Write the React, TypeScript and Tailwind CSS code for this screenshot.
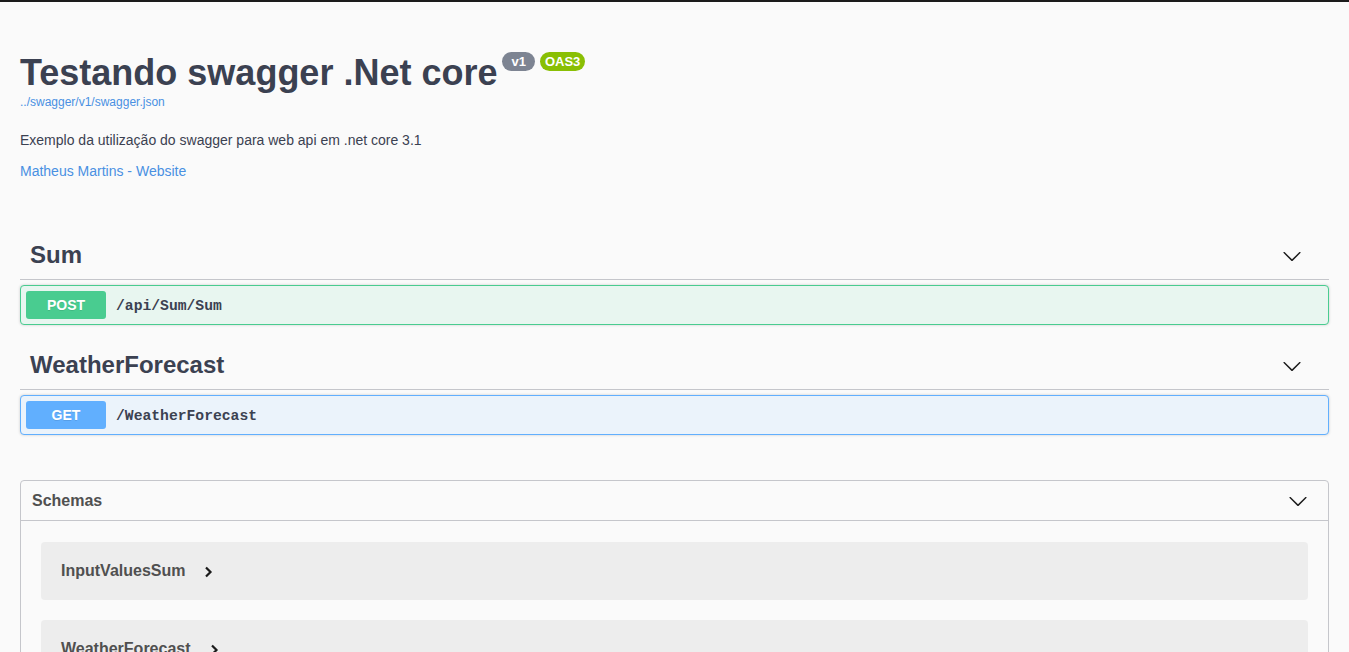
import React from 'react';

const FONT = { fontFamily: '"Liberation Sans", Arial, sans-serif' };
const MONO = { fontFamily: '"Liberation Mono", "DejaVu Sans Mono", monospace' };

function ChevronDown() {
  return (
    <svg width="20" height="20" viewBox="0 0 20 20" className="text-[#1b1b1b]" fill="currentColor">
      <path d="M17.418 6.109c.272-.268.709-.268.979 0s.271.701 0 .969l-7.908 7.83c-.27.268-.707.268-.979 0l-7.908-7.83c-.27-.268-.27-.701 0-.969.271-.268.709-.268.98 0L10 13.25l7.418-7.141z" />
    </svg>
  );
}

function ChevronRight() {
  return (
    <svg width="10" height="12" viewBox="0 0 10 12" fill="none" stroke="#1b1b1b" strokeWidth={2.2}>
      <path d="M3 1.5l4.5 4.5L3 10.5" />
    </svg>
  );
}

function Tag({ name }: { name: string }) {
  return (
    <div className="flex items-center border-b border-[#c5c6cb] pl-[10px] pr-[20px] pt-[10px] pb-[10px] mb-[5px]">
      <h3 className="flex-1 text-[24px] leading-[28px] font-bold text-[#3b4151]">{name}</h3>
      <div className="mr-[7px] mt-[1px]">
        <ChevronDown />
      </div>
    </div>
  );
}

function Operation({ method, path }: { method: 'POST' | 'GET'; path: string }) {
  const post = method === 'POST';
  return (
    <div
      className={
        'mb-[16px] h-[40px] rounded-[4px] border px-[5px] flex items-center shadow-[0_0_3px_rgba(0,0,0,0.19)] ' +
        (post ? 'border-[#49cc90] bg-[#e8f6f0]' : 'border-[#61affe] bg-[#ebf3fb]')
      }
    >
      <span
        className={
          'min-w-[80px] rounded-[3px] px-[15px] py-[6px] text-center text-[14px] leading-[16px] font-bold text-white [text-shadow:0_1px_0_rgba(0,0,0,0.1)] ' +
          (post ? 'bg-[#49cc90]' : 'bg-[#61affe]')
        }
      >
        {method}
      </span>
      <span className="px-[10px] mt-[2px] text-[14.7px] font-bold text-[#3b4151]" style={MONO}>
        {path}
      </span>
    </div>
  );
}

function Model({ name }: { name: string }) {
  return (
    <div className="mx-[20px] mb-[20px] h-[58px] rounded-[4px] bg-[#ededed] flex items-center pl-[20px]">
      <span className="text-[16px] font-bold text-[#505050]">{name}</span>
      <span className="ml-[18px] mt-[2px]">
        <ChevronRight />
      </span>
    </div>
  );
}

export default function App() {
  return (
    <div className="min-h-screen bg-[#fafafa]" style={FONT}>
      <div className="h-[2px] bg-[#1b1b1b]" />
      <div className="px-[20px]">
        <div className="mt-[50px] mb-[52px]">
          <div className="flex items-start">
            <h2 className="text-[36px] leading-[41px] font-bold text-[#3b4151]">Testando swagger .Net core</h2>
            <span className="ml-[5px] rounded-full bg-[#7d8492] px-[9px] py-[2px] text-[13px] leading-[15px] font-bold text-white">
              v1
            </span>
            <span className="ml-[5px] rounded-full bg-[#89bf04] px-[5px] py-[2px] text-[13px] leading-[15px] font-bold text-white">
              OAS3
            </span>
          </div>
          <a className="block text-[12px] leading-[15px] text-[#4990e2] mt-[2px]">../swagger/v1/swagger.json</a>
          <p className="mt-[22px] text-[14px] leading-[16px] text-[#3b4151]">
            Exemplo da utilização do swagger para web api em .net core 3.1
          </p>
          <a className="block mt-[15px] text-[14px] leading-[16px] text-[#4990e2]">Matheus Martins - Website</a>
        </div>

        <Tag name="Sum" />
        <Operation method="POST" path="/api/Sum/Sum" />
        <Tag name="WeatherForecast" />
        <Operation method="GET" path="/WeatherForecast" />

        <section className="mt-[45px] mb-[30px] rounded-[4px] border border-[#c5c6cb]">
          <div className="flex items-center border-b border-[#c5c6cb] pl-[11px] pr-[20px] h-[40px]">
            <h4 className="flex-1 text-[16px] font-bold text-[#505050]">Schemas</h4>
            <ChevronDown />
          </div>
          <div className="pt-[21px]">
            <Model name="InputValuesSum" />
            <Model name="WeatherForecast" />
          </div>
        </section>
      </div>
    </div>
  );
}
